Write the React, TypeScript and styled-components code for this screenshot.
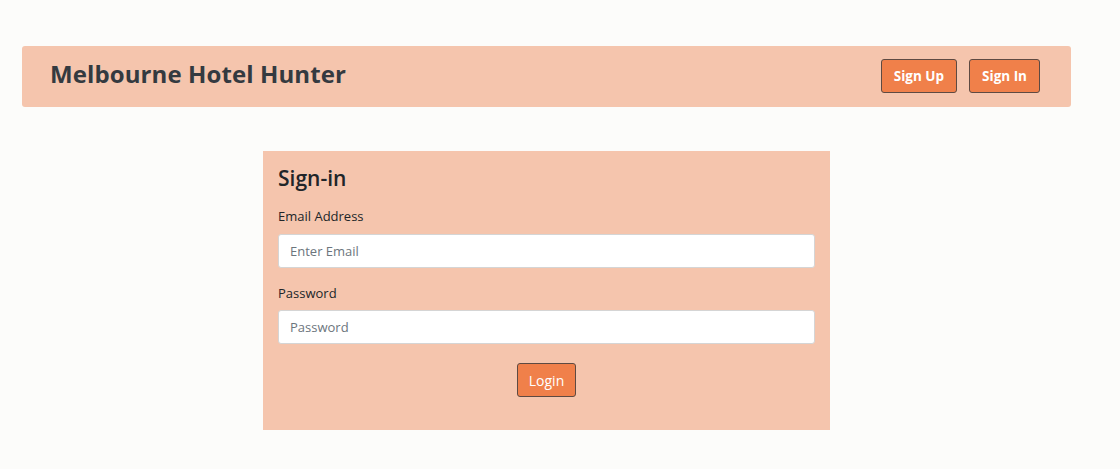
import React from "react";
import styled, { createGlobalStyle } from "styled-components";

const GlobalStyle = createGlobalStyle`
  body {
    margin: 0;
    background: #fcfcfa;
    font-family: "Open Sans", "Noto Sans", "Liberation Sans", sans-serif;
    color: #212529;
  }
`;

const Page = styled.div`
  padding: 46px 49px 40px 22px;
  display: flex;
  flex-direction: column;
  align-items: center;
`;

const Header = styled.header`
  align-self: stretch;
  height: 61px;
  background: #f5c5ad;
  border-radius: 3px;
  display: flex;
  align-items: center;
  justify-content: space-between;
  padding: 0 31px 0 28px;
  box-sizing: border-box;
`;

const Brand = styled.h1`
  margin: 0 0 4px;
  font-size: 24px;
  line-height: 1.2;
  font-weight: 700;
  color: #343a40;
  letter-spacing: 0.1px;
`;

const Nav = styled.nav`
  display: flex;
  gap: 12px;
  margin-bottom: 1px;
`;

const Button = styled.button<{ $bold?: boolean }>`
  background: #f0804a;
  color: #fff;
  border: 1px solid #5e4a42;
  border-radius: 3px;
  font-family: inherit;
  font-size: ${(p) => (p.$bold ? "13.5px" : "14px")};
  font-weight: ${(p) => (p.$bold ? 700 : 400)};
  height: 34px;
  padding: 0 ${(p) => (p.$bold ? "12px" : "11px")};
  cursor: pointer;
`;

const Card = styled.form`
  width: 567px;
  box-sizing: border-box;
  margin-top: 44px;
  background: #f5c5ad;
  padding: 14px 15px 33px;
  display: flex;
  flex-direction: column;
`;

const Title = styled.h2`
  margin: 0 0 15px;
  font-size: 21px;
  line-height: 1.3;
  font-weight: 600;
  color: #212529;
`;

const Label = styled.label`
  font-size: 13px;
  line-height: 1.5;
  margin-bottom: 7px;
`;

const Input = styled.input`
  height: 34px;
  box-sizing: border-box;
  border: 1px solid #d5d5d5;
  border-radius: 3px;
  background: #fff;
  padding: 0 11px;
  font-family: inherit;
  font-size: 13px;
  margin-bottom: 16px;
  &::placeholder {
    color: #6c757d;
  }
`;

const Actions = styled.div`
  display: flex;
  justify-content: center;
  margin-top: 3px;
`;

export default function App() {
  return (
    <>
      <GlobalStyle />
      <Page>
        <Header>
          <Brand>Melbourne Hotel Hunter</Brand>
          <Nav>
            <Button $bold type="button">Sign Up</Button>
            <Button $bold type="button">Sign In</Button>
          </Nav>
        </Header>
        <Card onSubmit={(e) => e.preventDefault()}>
          <Title>Sign-in</Title>
          <Label htmlFor="email">Email Address</Label>
          <Input id="email" type="email" placeholder="Enter Email" />
          <Label htmlFor="password">Password</Label>
          <Input id="password" type="password" placeholder="Password" />
          <Actions>
            <Button type="submit">Login</Button>
          </Actions>
        </Card>
      </Page>
    </>
  );
}
